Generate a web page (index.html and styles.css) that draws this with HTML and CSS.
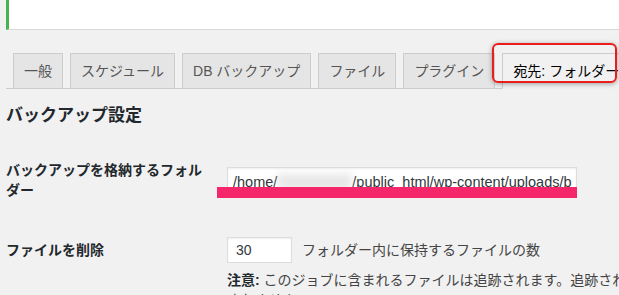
FILE: index.html
```html
<!DOCTYPE html>
<html lang="ja">
<head>
<meta charset="utf-8">
<title>BackWPup</title>
<link rel="stylesheet" href="styles.css">
</head>
<body>
<div class="wrap">
  <div class="notice"></div>
  <nav class="tabs">
    <span class="tab">一般</span>
    <span class="tab">スケジュール</span>
    <span class="tab">DB バックアップ</span>
    <span class="tab">ファイル</span>
    <span class="tab">プラグイン</span>
    <span class="tab tab-active">宛先: フォルダー</span>
  </nav>
  <div class="callout"></div>
  <h2 class="title">バックアップ設定</h2>
  <table class="form-table">
    <tr>
      <th>バックアップを格納するフォルダー</th>
      <td class="cell-folder">
        <div class="field"><span class="field-text">/home/<span class="blur"></span>/public_html/wp-content/uploads/backwpup-backups/</span></div>
      </td>
    </tr>
    <tr>
      <th>ファイルを削除</th>
      <td class="cell-delete">
        <div class="line"><span class="num">30</span><span class="desc">フォルダー内に保持するファイルの数</span></div>
        <p class="note"><strong>注意:</strong> このジョブに含まれるファイルは追跡されます。追跡されていないファイルは削除されません。</p>
      </td>
    </tr>
  </table>
  <div class="underline"></div>
</div>
</body>
</html>
```

FILE: styles.css
```css
html, body {
  margin: 0;
  padding: 0;
}
body {
  background: #f1f1f1;
  color: #444;
  font-family: "Liberation Sans", "Noto Sans CJK JP", sans-serif;
  font-size: 14px;
  overflow: hidden;
  width: 619px;
  height: 295px;
}
.wrap {
  position: relative;
  padding-left: 6px;
}
.notice {
  height: 29px;
  background: #fff;
  border-left: 3px solid #46b450;
  border-bottom: 1px solid #d8d8d8;
}
.tabs {
  display: flex;
  align-items: flex-end;
  margin-top: 23px;
  border-bottom: 1px solid #ccc;
  white-space: nowrap;
  width: 900px;
}
.tab {
  flex: none;
  font-size: 14px;
  line-height: 24px;
  padding: 5px 10px;
  margin-left: 7px;
  border: 1px solid #ccc;
  border-bottom: none;
  background: #e5e5e5;
  color: #555;
}
.tab-active {
  background: #f1f1f1;
  color: #000;
  border-bottom: 1px solid #f1f1f1;
  margin-bottom: -1px;
}
.callout {
  position: absolute;
  left: 492px;
  top: 43px;
  width: 121px;
  height: 36px;
  border: 2px solid #ea1c1c;
  border-radius: 6px;
  box-shadow: 0 1px 5px rgba(0,0,0,0.35);
}
.title {
  margin: 16px 0 0;
  font-size: 17px;
  line-height: 22px;
  font-weight: 700;
  color: #23282d;
}
.form-table {
  border-collapse: collapse;
  table-layout: fixed;
  width: 900px;
  margin-top: 13px;
}
.form-table th {
  width: 200px;
  padding: 20px 10px 20px 0;
  text-align: left;
  vertical-align: top;
  font-weight: 700;
  line-height: 20px;
  color: #23282d;
}
.form-table td {
  vertical-align: top;
  padding: 0 0 0 11px;
  line-height: 20px;
}
.form-table td.cell-folder {
  padding-top: 27px;
}
.form-table td.cell-delete {
  padding-top: 17px;
}
.field {
  width: 339px;
  height: 28px;
  border: 1px solid #ddd;
  background: #fff;
  padding: 0 4px 0 5px;
  overflow: hidden;
  box-shadow: inset 0 1px 2px rgba(0,0,0,0.07);
}
.field-text {
  display: block;
  overflow: hidden;
  white-space: nowrap;
  line-height: 28px;
  font-size: 14.5px;
  color: #32373c;
}
.blur {
  display: inline-block;
  width: 75px;
  height: 16px;
  vertical-align: -3px;
  background: #d0d0d0;
  filter: blur(4px);
  opacity: 0.5;
}
.line {
  display: flex;
  align-items: center;
  gap: 10px;
}
.num {
  display: block;
  width: 55px;
  height: 24px;
  border: 1px solid #ddd;
  background: #fff;
  padding-left: 8px;
  line-height: 24px;
  color: #32373c;
  box-shadow: inset 0 1px 2px rgba(0,0,0,0.07);
}
.desc {
  color: #444;
}
.note {
  margin: 7px 0 0;
  width: 560px;
  color: #444;
}
.note strong {
  color: #23282d;
}
.underline {
  position: absolute;
  left: 217px;
  top: 187px;
  width: 360px;
  height: 11px;
  background: #f5276a;
}
```
